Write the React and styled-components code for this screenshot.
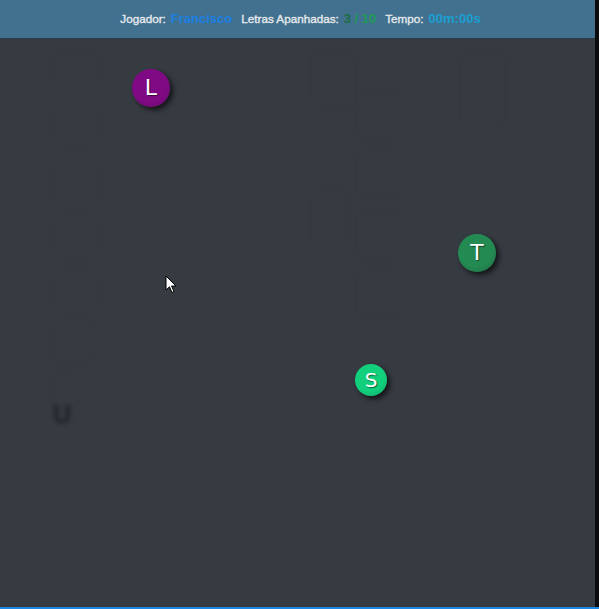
import styled, { createGlobalStyle } from "styled-components";

const GlobalStyle = createGlobalStyle`
  html, body {
    margin: 0;
    padding: 0;
    background: #0b0c0d;
  }
  * {
    box-sizing: border-box;
  }
`;

const letters = [
  { char: "L", x: 132, y: 30, size: 38, color: "#800a84", font: 22 },
  { char: "T", x: 458, y: 195, size: 38, color: "#238a52", font: 22 },
  { char: "S", x: 355, y: 325, size: 32, color: "#12cf7c", font: 20 },
];

// faint trail left behind by the snake
const trail = [
  { x: 53, y: 10, w: 46, h: 40 },
  { x: 53, y: 64, w: 46, h: 44 },
  { x: 53, y: 120, w: 46, h: 50 },
  { x: 53, y: 176, w: 46, h: 44 },
  { x: 53, y: 230, w: 46, h: 44 },
  { x: 50, y: 280, w: 46, h: 44 },
  { x: 50, y: 330, w: 30, h: 40 },
  { x: 310, y: 10, w: 46, h: 60 },
  { x: 355, y: 50, w: 46, h: 50 },
  { x: 355, y: 110, w: 46, h: 50 },
  { x: 355, y: 170, w: 46, h: 50 },
  { x: 355, y: 230, w: 46, h: 50 },
  { x: 310, y: 150, w: 40, h: 60 },
  { x: 460, y: 10, w: 46, h: 80 },
];

export default function App() {
  return (
    <>
      <GlobalStyle />
      <Frame>
        <Body>
          <Game>
            <Header>
              <Label>Jogador:</Label>
              <Value $color="#1b7fe3">Francisco</Value>
              <Label>Letras Apanhadas:</Label>
              <Value $color="#1f9a55">
                <Dim>3</Dim> / 10
              </Value>
              <Label>Tempo:</Label>
              <Value $color="#1b9fcf">00m:00s</Value>
            </Header>
            <Canvas>
              {trail.map((t, i) => (
                <Trail
                  key={i}
                  style={{ left: t.x, top: t.y, width: t.w, height: t.h }}
                />
              ))}
              <Head style={{ left: 53, top: 361 }}>U</Head>
              {letters.map((l) => (
                <Ball
                  key={l.char}
                  $color={l.color}
                  $size={l.size}
                  $font={l.font}
                  style={{ left: l.x, top: l.y }}
                >
                  {l.char}
                </Ball>
              ))}
              <Cursor style={{ left: 165, top: 236 }} viewBox="0 0 12 19">
                <path
                  d="M1 1 L1 15 L4.5 11.8 L7 17.5 L9 16.6 L6.6 11 L11 11 Z"
                  fill="#fff"
                  stroke="#000"
                  strokeWidth="1"
                  strokeLinejoin="round"
                />
              </Cursor>
            </Canvas>
          </Game>
          <Strip />
        </Body>
        <BottomLine />
      </Frame>
    </>
  );
}

const Frame = styled.div`
  display: flex;
  flex-direction: column;
  width: 599px;
  height: 609px;
`;

const Body = styled.div`
  flex: 1;
  display: flex;
  min-height: 0;
`;

const Game = styled.div`
  flex: 1;
  display: flex;
  flex-direction: column;
`;

const Strip = styled.div`
  width: 4px;
  background: #0b0c0d;
`;

const BottomLine = styled.div`
  height: 2px;
  background: #1e88e0;
`;

const Header = styled.div`
  height: 39px;
  display: flex;
  align-items: center;
  justify-content: center;
  gap: 5px;
  padding-left: 10px;
  padding-bottom: 1px;
  background: #41718f;
  border-bottom: 1px solid #2b3a46;
  font-family: "Liberation Sans", Arial, sans-serif;
`;

const Label = styled.span`
  color: #e6e9ec;
  font-size: 11.7px;
  -webkit-text-stroke: 0.35px currentColor;
`;

const Value = styled.span`
  color: ${(p) => p.$color};
  font-size: 13px;
  font-weight: 700;
  margin-right: 4px;
`;

const Dim = styled.span`
  color: #1d6e44;
`;

const Canvas = styled.div`
  position: relative;
  flex: 1;
  background: #363a41;
  overflow: hidden;
`;

const Trail = styled.div`
  position: absolute;
  border-radius: 12px;
  border: 1px solid rgba(0, 0, 0, 0.015);
  filter: blur(1px);
`;

const Head = styled.div`
  position: absolute;
  font-family: "Liberation Sans", Arial, sans-serif;
  font-size: 25px;
  font-weight: 700;
  color: #202327;
  filter: blur(2px);
`;

const Ball = styled.div`
  position: absolute;
  width: ${(p) => p.$size}px;
  height: ${(p) => p.$size}px;
  border-radius: 50%;
  display: flex;
  align-items: center;
  justify-content: center;
  background: radial-gradient(
    circle at 45% 40%,
    ${(p) => p.$color} 55%,
    color-mix(in srgb, ${(p) => p.$color} 80%, #000) 100%
  );
  box-shadow: 3px 3px 5px rgba(0, 0, 0, 0.65);
  color: #fff;
  font-family: "DejaVu Sans", sans-serif;
  font-size: ${(p) => p.$font}px;
  line-height: 1;
  text-shadow: 1px 1px 1px rgba(0, 0, 0, 0.5);
`;

const Cursor = styled.svg`
  position: absolute;
  width: 12px;
  height: 19px;
`;
